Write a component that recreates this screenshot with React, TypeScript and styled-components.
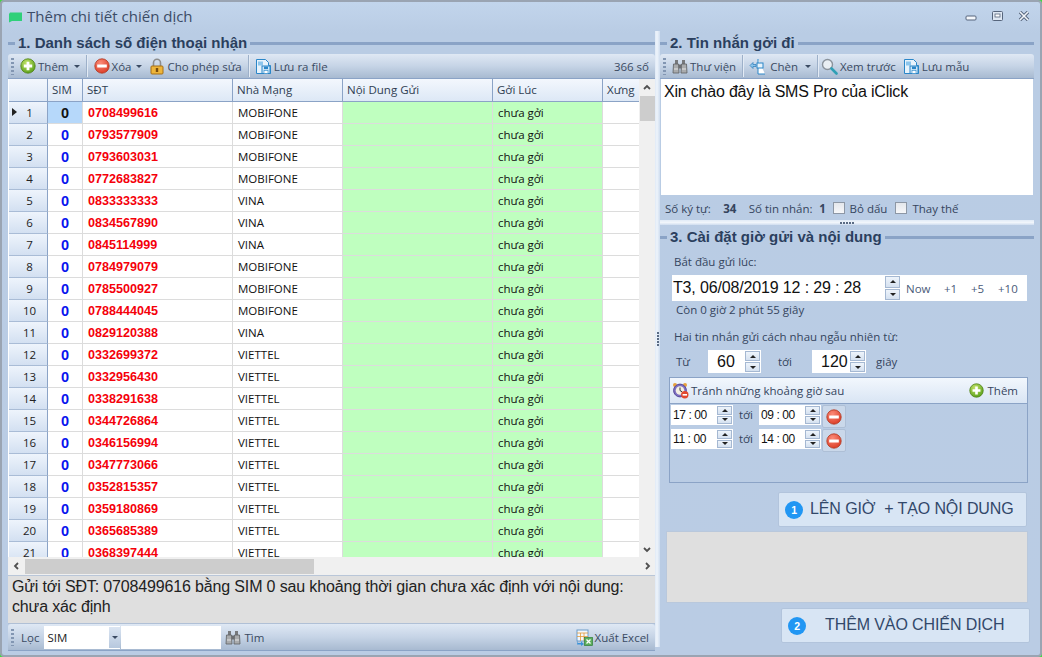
import React from "react";
import styled, { createGlobalStyle } from "styled-components";

const Global = createGlobalStyle`
  html, body { margin: 0; padding: 0; background: #3ddc3d; }
  #root { width: 1042px; height: 657px; overflow: hidden; }
  * { box-sizing: border-box; }
`;

const UI = `"Open Sans", "Noto Sans", "DejaVu Sans", sans-serif`;
const ARIAL = `"Liberation Sans", Arial, sans-serif`;

const Win = styled.div`
  width: 1042px; height: 657px; display: flex; flex-direction: column;
  background: linear-gradient(#c2d5ec 0, #b9cce4 31px, #bacce4 100%);
  border: 2px solid #9aa4b2; border-radius: 4px; overflow: hidden;
  font-family: ${UI}; font-size: 11.5px; color: #35455e;
`;
const TitleBar = styled.div`
  height: 29px; flex: none; display: flex; align-items: center; padding: 0 10px 0 6px; gap: 5px;
`;
const TitleText = styled.div`font-size: 15px; color: #3c4c66; flex: 1; margin-top: -2px;`;
const WinBtns = styled.div`display: flex; gap: 15px; align-items: center; margin-top: -1px;`;
const Main = styled.div`flex: 1; display: flex; min-height: 0; padding: 0 6px 6px 6px;`;
const LeftPanel = styled.div`width: 647px; flex: none; display: flex; flex-direction: column;`;
const VSplit = styled.div`
  width: 5px; flex: none; background: linear-gradient(90deg, #dfe9f6, #eef4fb 40%, #cfddef);
  display: flex; flex-direction: column; justify-content: center; align-items: center; gap: 1px;
  margin-bottom: 2px;
`;
const Dot = styled.i`display: block; width: 2px; height: 2px; background: #5a6b84;`;
const RightPanel = styled.div`flex: 1; display: flex; flex-direction: column; min-width: 0;`;

const Heading = styled.div<{ $indent: number }>`
  height: 23px; flex: none; display: flex; align-items: center; gap: 3px;
  font: bold 15px ${ARIAL}; color: #2b3f5e; white-space: nowrap;
  &::before { content: ""; width: ${(p) => p.$indent}px; height: 3px; background: #8aa3c6; margin-top: 1px; }
  &::after { content: ""; flex: 1; height: 3px; background: #8aa3c6; margin-top: 1px; }
`;
const Toolbar = styled.div<{ $h?: number }>`
  height: ${(p) => p.$h ?? 25}px; flex: none; display: flex; align-items: center; padding: 0 6px 0 2px;
  background: linear-gradient(#dfe8f4, #c6d4e6 50%, #a8bad1);
  border-bottom: 1px solid #8ba3c6; border-radius: 3px 3px 0 0; color: #3a4a62; white-space: nowrap;
`;
const Grip = styled.div`
  width: 3px; height: 17px; margin: 0 3px 0 1px; flex: none;
  background: repeating-linear-gradient(#8296b2 0 2px, transparent 2px 4px);
`;
const TbItem = styled.div<{ $gap?: number; $ml?: number; $mr?: number }>`
  display: flex; align-items: center; gap: ${(p) => p.$gap ?? 2}px; padding: 0 3px; flex: none;
  margin-left: ${(p) => p.$ml ?? 0}px; margin-right: ${(p) => p.$mr ?? 0}px;
`;
const TbSep = styled.div`width: 1px; height: 22px; background: #9db0c9; box-shadow: 1px 0 0 #e3ebf5; margin: 0 3px; flex: none;`;
const Spacer = styled.div`flex: 1;`;
const Caret = styled.i`
  display: block; width: 0; height: 0; margin-left: 3px; margin-top: 1px;
  border-left: 3px solid transparent; border-right: 3px solid transparent; border-top: 3px solid #3a4a62;
`;
const FilterLabel = styled.span`margin-left: 4px;`;

const GridWrap = styled.div`height: 496px; flex: none; display: flex; flex-direction: column; background: #f0f0f0;`;
const GridTop = styled.div`height: 478px; flex: none; display: flex;`;
const Viewport = styled.div`width: 631px; flex: none; overflow: hidden; background: #fff; padding-left: 1px;`;
const Columns = "39px 35px 150px 110px 150px 110px 38px";
const HeadRow = styled.div`
  display: grid; grid-template-columns: ${Columns}; height: 23px;
  border-bottom: 1px solid #8ba3c6;
`;
const HeadCell = styled.div`
  display: flex; align-items: center; padding: 0 0 1px 4px; overflow: hidden; white-space: nowrap;
  background: linear-gradient(#f3f7fd, #dde8f6); border-right: 1px solid #8ba3c6; color: #2f3d52;
`;
const Row = styled.div`display: grid; grid-template-columns: ${Columns}; height: 22px;`;
const Cell = styled.div<{ $green?: boolean }>`
  display: flex; align-items: center; padding-left: 5px; white-space: nowrap; overflow: hidden;
  color: #111; border-right: 1px solid #dcdcdc; border-bottom: 1px solid #dcdcdc;
  background: ${(p) => (p.$green ? "#bfffbf" : "#fff")};
`;
const RowHead = styled.div`
  position: relative; display: flex; align-items: center; justify-content: center; padding-left: 3px;
  background: linear-gradient(#eef4fc, #d3e0f1); border-right: 1px solid #8ba3c6; border-bottom: 1px solid #a9bcd6;
  color: #222;
`;
const RowMark = styled.i`
  position: absolute; left: 3px; top: 6px; width: 0; height: 0;
  border-top: 4px solid transparent; border-bottom: 4px solid transparent; border-left: 5px solid #222;
`;
const SimCell = styled(Cell)<{ $sel?: boolean }>`
  justify-content: center; padding-left: 0; font: bold 14.5px ${ARIAL};
  color: ${(p) => (p.$sel ? "#111" : "#0a14ee")};
  background: ${(p) => (p.$sel ? "#b6d8fa" : "#fff")};
`;
const PhoneCell = styled(Cell)`font: bold 12.6px ${ARIAL}; color: #f5000a;`;

const VBar = styled.div`width: 16px; flex: none; display: flex; flex-direction: column; align-items: center; background: #f0f0f0;`;
const VBtn = styled.div`height: 17px; width: 100%; display: flex; align-items: center; justify-content: center; flex: none;`;
const VThumb = styled.div`width: 15px; height: 25px; background: #cdcdcd; flex: none;`;
const HBar = styled.div`height: 18px; flex: none; display: flex; align-items: center; background: #f0f0f0; padding-right: 0;`;
const HThumb = styled.div`width: 289px; height: 15px; background: #cdcdcd; flex: none;`;
const HBtn = styled.div`width: 17px; height: 100%; display: flex; align-items: center; justify-content: center; flex: none;`;

const MsgBox = styled.div`
  height: 49px; flex: none; background: #dfdfdf; border-top: 1px solid #b9c6d8; border-bottom: 1px solid #b0c0d6;
  padding: 1px 8px 0 4px; font: 16px/20px ${ARIAL}; color: #222; letter-spacing: -0.15px;
`;
const FilterCombo = styled.div`width: 76px; height: 23px; background: #fff; display: flex; align-items: center; padding-left: 3px; color: #222; flex: none; margin-left: 5px; justify-content: space-between;`;
const ComboArrow = styled.div`width: 11px; height: 21px; background: linear-gradient(#dbe5f2, #b7c8de); display: flex; align-items: center; justify-content: center;`;
const FilterInput = styled.div`width: 100px; height: 23px; background: #fff; margin: 0 1px 0 1px; flex: none;`;

const TextArea = styled.div`
  height: 116px; flex: none; background: #fff; margin: 0 1px; padding: 3px 3px; font: 16px/20px ${ARIAL}; color: #111; letter-spacing: -0.2px;
`;
const Stats = styled.div`
  height: 25px; flex: none; display: flex; align-items: center; padding-left: 5px; padding-top: 1px; white-space: nowrap;
`;
const StatV = styled.b<{ $w: number }>`display: block; width: ${(p) => p.$w}px; text-align: center; font-weight: 700;`;
const Check = styled.i<{ $ml: number }>`display: block; width: 12px; height: 12px; margin-left: ${(p) => p.$ml}px; border: 1px solid #8d97a5; background: linear-gradient(#e4e7ec, #f6f7f9); margin-right: 5px;`;
const HSplit = styled.div`
  height: 5px; flex: none; background: linear-gradient(#e1ebf7, #f0f5fb, #cfddef);
  display: flex; align-items: center; justify-content: center; gap: 1px;
`;
const Section = styled.div`flex: 1; display: flex; flex-direction: column; padding-left: 9px; padding-right: 6px;`;
const Label = styled.div<{ $mt: number; $ml?: number }>`margin-top: ${(p) => p.$mt}px; margin-left: ${(p) => p.$ml ?? 5}px; height: 16px; line-height: 16px; white-space: nowrap;`;
const DateBox = styled.div`
  margin: 5px 0 0 3px; height: 26px; width: 355px; flex: none; background: #fff; display: flex; align-items: center; padding-left: 1px;
`;
const DateText = styled.div`width: 212px; font: 16px ${ARIAL}; color: #111; white-space: pre; flex: none; letter-spacing: -0.15px;`;
const QuickBtn = styled.div<{ $w: number }>`width: ${(p) => p.$w}px; flex: none; color: #4a5a78;`;
const SpinWrap = styled.div<{ $w: number; $h: number }>`
  width: ${(p) => p.$w}px; height: ${(p) => p.$h}px; flex: none; display: flex; flex-direction: column; gap: 1px;
`;
const SpinBtn = styled.div`
  flex: 1; background: linear-gradient(#eef4fb, #d5e1f0); border: 1px solid #a5b8d2; display: flex; align-items: center; justify-content: center;
`;
const Arrow = styled.i<{ $up?: boolean }>`
  display: block; width: 0; height: 0; border-left: 3px solid transparent; border-right: 3px solid transparent;
  ${(p) => (p.$up ? "border-bottom: 3px solid #222;" : "border-top: 3px solid #222;")}
`;
const RangeRow = styled.div`display: flex; align-items: center; height: 23px; margin-top: 5px; flex: none;`;
const RangeLabel = styled.div<{ $w: number; $ml: number }>`width: ${(p) => p.$w}px; margin-left: ${(p) => p.$ml}px; flex: none; white-space: nowrap;`;
const NumBox = styled.div<{ $w: number }>`
  width: ${(p) => p.$w}px; height: 23px; background: #fff; display: flex; align-items: center; justify-content: space-between; padding: 0 1px 0 9px; flex: none;
  font: 16px ${ARIAL}; color: #111;
`;
const AvoidPanel = styled.div`
  margin-top: 4px; width: 359px; height: 106px; flex: none; border: 1px solid #8ba3c6; display: flex; flex-direction: column;
`;
const AvoidHead = styled.div`
  height: 26px; flex: none; background: linear-gradient(#f2f7fd, #d9e5f4); border-bottom: 1px solid #8ba3c6;
  display: flex; align-items: center; padding: 0 9px 0 2px; gap: 2px;
`;
const AddLabel = styled.span`margin-left: 2px;`;
const AvoidRow = styled.div`display: flex; align-items: flex-start; height: 24px; padding: 1px 0 0 1px; flex: none;`;
const TimeBox = styled.div`
  width: 62px; height: 20px; background: #fff; display: flex; align-items: center; justify-content: space-between; padding: 0 1px 0 2px; flex: none;
  font: 12px ${ARIAL}; color: #111; white-space: pre; letter-spacing: -0.4px;
`;
const TimeLabel = styled.div`width: 26px; line-height: 20px; text-align: center; flex: none;`;
const DelBtn = styled.div`
  width: 24px; height: 23px; margin-left: 1px; background: #cad8ea; border: 1px solid #aebfd6; border-radius: 2px; display: flex; align-items: center; justify-content: center; flex: none;
`;
const BigBtn = styled.div<{ $w: number; $ml: number; $mt: number; $gap: number }>`
  width: ${(p) => p.$w}px; height: 35px; flex: none; margin-left: ${(p) => p.$ml}px; margin-top: ${(p) => p.$mt}px;
  background: #d8e5f4; border: 1px solid #b2c4dc; border-radius: 2px;
  display: flex; align-items: center; padding-left: 6px; gap: ${(p) => p.$gap}px; white-space: pre;
  font: 16px ${ARIAL}; color: #32486a; letter-spacing: -0.1px;
`;
const BtnText = styled.span`margin-top: -2px;`;
const Badge = styled.div`
  width: 18px; height: 18px; border-radius: 50%; background: #2196f3; color: #fff; flex: none;
  font: bold 10.5px ${ARIAL}; display: flex; align-items: center; justify-content: center;
`;
const GreyBox = styled.div`
  height: 72px; width: 362px; flex: none; margin-top: 4px; background: #dfdfdf; border: 1px solid #b9c8dc; margin-left: -3px;
`;

const PlusIcon = ({ s = 16 }: { s?: number }) => (
  <svg width={s} height={s} viewBox="0 0 16 16">
    <defs><radialGradient id="gp" cx=".4" cy=".3" r=".8"><stop offset="0" stopColor="#c4e36a" /><stop offset="1" stopColor="#4f9a12" /></radialGradient></defs>
    <circle cx="8" cy="8" r="7.2" fill="url(#gp)" stroke="#4c7f14" strokeWidth=".8" />
    <path d="M6.6 3.8h2.8v2.8h2.8v2.8H9.4v2.8H6.6V9.4H3.8V6.6h2.8z" fill="#fff" />
  </svg>
);
const MinusIcon = ({ s = 16 }: { s?: number }) => (
  <svg width={s} height={s} viewBox="0 0 16 16">
    <defs><radialGradient id="rm" cx=".4" cy=".3" r=".8"><stop offset="0" stopColor="#fb8b78" /><stop offset="1" stopColor="#d8341e" /></radialGradient></defs>
    <circle cx="8" cy="8" r="7.2" fill="url(#rm)" stroke="#b0371f" strokeWidth=".8" />
    <rect x="3.2" y="6.5" width="9.6" height="3" fill="#fff" />
  </svg>
);
const LockIcon = () => (
  <svg width="14" height="17" viewBox="0 0 14 17">
    <path d="M3.5 8V4.8a3.5 3.5 0 0 1 7 0V8" fill="none" stroke="#8d8d8d" strokeWidth="1.6" />
    <rect x="1" y="8" width="12" height="8" rx="1" fill="#eeb53a" stroke="#a66f14" />
    <rect x="5.8" y="10" width="2.4" height="4" fill="#7a4c0c" />
  </svg>
);
const SaveIcon = () => (
  <svg width="17" height="17" viewBox="0 0 17 17">
    <path d="M1.5 1.5h9l3 3v3h2v8h-14z" fill="#e7f3fc" stroke="#2a86c8" />
    <rect x="3" y="3.5" width="5" height="4" fill="#8cc5ec" />
    <rect x="7" y="8" width="8" height="7.5" fill="#cfe7f8" stroke="#2a86c8" />
    <rect x="9" y="8.5" width="4" height="2.6" fill="#2a86c8" />
    <rect x="9" y="12.5" width="4" height="3" fill="#fff" stroke="#2a86c8" strokeWidth=".6" />
  </svg>
);
const BinocIcon = () => (
  <svg width="16" height="15" viewBox="0 0 16 15">
    <path d="M3 1h3v4H3zM10 1h3v4h-3z" fill="#77797c" />
    <path d="M1.5 5h5l.5 9H1zM9.5 5h5l.5 9H9z" fill="#a9abad" stroke="#5d5f62" strokeWidth=".8" />
    <rect x="6.5" y="5.5" width="3" height="4" fill="#6c6e71" />
    <path d="M2 10h4M10 10h4" stroke="#e4e4e4" />
  </svg>
);
const InsertIcon = () => (
  <svg width="17" height="17" viewBox="0 0 17 17">
    <path d="M9 1v15h7" fill="#fff" stroke="#2a86c8" />
    <rect x="8" y="5" width="6" height="5" fill="#e8f3fb" stroke="#2a86c8" />
    <path d="M1 7.5l3-3v2h3v2H4v2z" fill="#8cc5ec" stroke="#2a7ab8" strokeWidth=".7" />
  </svg>
);
const SearchIcon = () => (
  <svg width="17" height="17" viewBox="0 0 17 17">
    <circle cx="6.5" cy="6.5" r="5" fill="#e9eef3" stroke="#8b939c" strokeWidth="1.4" />
    <path d="M10.5 10.5l5 5" stroke="#2f9fb5" strokeWidth="2.6" strokeLinecap="round" />
  </svg>
);
const ExcelIcon = () => (
  <svg width="17" height="17" viewBox="0 0 17 17">
    <rect x="1" y="1" width="11" height="11" fill="#f3f7fb" stroke="#6f9dc9" />
    <path d="M1 4h11M1 7.5h11M4.5 4v8M8 4v8" stroke="#e39a3a" strokeWidth=".8" />
    <path d="M2 11v3h3v-1.6l3 2.6-3 2v-1.4H1z" fill="#3a92d8" />
    <rect x="8.5" y="8.5" width="8" height="8" fill="#5cae5c" stroke="#2f7d38" strokeWidth=".7" />
    <path d="M10.5 10.5l4 4m0-4l-4 4" stroke="#fff" strokeWidth="1.3" />
  </svg>
);
const AlarmIcon = () => (
  <svg width="17" height="17" viewBox="0 0 17 17">
    <circle cx="3" cy="3" r="2" fill="#e8a13c" />
    <circle cx="13" cy="3" r="2" fill="#e8a13c" />
    <circle cx="8" cy="8.5" r="6.4" fill="#7d6fc0" stroke="#56489a" />
    <circle cx="8" cy="8.5" r="4.3" fill="#f4efe2" />
    <path d="M8 5.5v3l2.2 1.4" stroke="#333" fill="none" />
    <circle cx="12.8" cy="12.8" r="3.7" fill="#e2492f" />
    <rect x="10.6" y="12" width="4.4" height="1.6" fill="#fff" />
  </svg>
);
const ChatIcon = () => (
  <svg width="14" height="12" viewBox="0 0 14 12">
    <path d="M2 1.5h12v8.5H4L1 11.5V3z" fill="#2fd07a" />
  </svg>
);
const Chevron = ({ dir }: { dir: "up" | "down" | "left" | "right" }) => {
  const d = { up: "M2 6l3-3 3 3", down: "M2 4l3 3 3-3", left: "M6 2L3 5l3 3", right: "M4 2l3 3-3 3" }[dir];
  return (
    <svg width="10" height="10" viewBox="0 0 10 10">
      <path d={d} fill="none" stroke="#505050" strokeWidth="1.8" />
    </svg>
  );
};
const Spin = ({ w, h }: { w: number; h: number }) => (
  <SpinWrap $w={w} $h={h}>
    <SpinBtn><Arrow $up /></SpinBtn>
    <SpinBtn><Arrow /></SpinBtn>
  </SpinWrap>
);

const phones = [
  "0708499616", "0793577909", "0793603031", "0772683827", "0833333333", "0834567890", "0845114999",
  "0784979079", "0785500927", "0788444045", "0829120388", "0332699372", "0332956430", "0338291638",
  "0344726864", "0346156994", "0347773066", "0352815357", "0359180869", "0365685389", "0368397444",
];
const carrier = (i: number) =>
  i < 4 || (i >= 7 && i <= 9) ? "MOBIFONE" : i <= 6 || i === 10 ? "VINA" : "VIETTEL";

const dots = [0, 1, 2, 3, 4];

export default function App() {
  return (
    <Win>
      <Global />
      <TitleBar>
        <ChatIcon />
        <TitleText>Thêm chi tiết chiến dịch</TitleText>
        <WinBtns>
          <svg width="12" height="10" viewBox="0 0 12 10"><rect x="1" y="5" width="10" height="4" rx="1" fill="#f4f7fb" stroke="#56657c" /></svg>
          <svg width="11" height="10" viewBox="0 0 11 10"><rect x=".5" y=".5" width="10" height="9" rx="1" fill="#dfe8f3" stroke="#56657c" /><rect x="3" y="3" width="5" height="3" fill="#fff" stroke="#56657c" strokeWidth=".8" /></svg>
          <svg width="12" height="10" viewBox="0 0 12 10"><path d="M2 1l8 8M10 1L2 9" stroke="#56657c" strokeWidth="3.4" /><path d="M2 1l8 8M10 1L2 9" stroke="#f2f5f9" strokeWidth="1.6" /></svg>
        </WinBtns>
      </TitleBar>
      <Main>
        <LeftPanel>
          <Heading $indent={7}>1. Danh sách số điện thoại nhận</Heading>
          <Toolbar>
            <Grip />
            <TbItem><PlusIcon /><span>Thêm</span><Caret /></TbItem>
            <TbSep />
            <TbItem $ml={1}><MinusIcon /><span>Xóa</span><Caret /></TbItem>
            <TbItem $ml={2} $gap={3}><LockIcon /><span>Cho phép sửa</span></TbItem>
            <TbSep />
            <TbItem><SaveIcon /><span>Lưu ra file</span></TbItem>
            <Spacer />
            <span>366 số</span>
          </Toolbar>
          <GridWrap>
            <GridTop>
              <Viewport>
                <HeadRow>
                  <HeadCell />
                  <HeadCell>SIM</HeadCell>
                  <HeadCell>SĐT</HeadCell>
                  <HeadCell>Nhà Mạng</HeadCell>
                  <HeadCell>Nội Dung Gửi</HeadCell>
                  <HeadCell>Gởi Lúc</HeadCell>
                  <HeadCell>Xưng</HeadCell>
                </HeadRow>
                {phones.map((p, i) => (
                  <Row key={p}>
                    <RowHead>{i === 0 && <RowMark />}{i + 1}</RowHead>
                    <SimCell $sel={i === 0}>0</SimCell>
                    <PhoneCell>{p}</PhoneCell>
                    <Cell>{carrier(i)}</Cell>
                    <Cell $green />
                    <Cell $green>chưa gởi</Cell>
                    <Cell />
                  </Row>
                ))}
              </Viewport>
              <VBar>
                <VBtn><Chevron dir="up" /></VBtn>
                <VThumb />
                <Spacer />
                <VBtn><Chevron dir="down" /></VBtn>
              </VBar>
            </GridTop>
            <HBar>
              <HBtn><Chevron dir="left" /></HBtn>
              <HThumb />
              <Spacer />
              <HBtn><Chevron dir="right" /></HBtn>
            </HBar>
          </GridWrap>
          <MsgBox>Gửi tới SĐT: 0708499616 bằng SIM 0 sau khoảng thời gian chưa xác định với nội dung: chưa xác định</MsgBox>
          <Toolbar $h={27}>
            <Grip />
            <FilterLabel>Lọc</FilterLabel>
            <FilterCombo><span>SIM</span><ComboArrow><Caret style={{ margin: 0 }} /></ComboArrow></FilterCombo>
            <FilterInput />
            <TbItem $gap={3}><BinocIcon /><span>Tìm</span></TbItem>
            <Spacer />
            <TbItem $mr={-3}><ExcelIcon /><span>Xuất Excel</span></TbItem>
          </Toolbar>
        </LeftPanel>
        <VSplit>{dots.map((d) => <Dot key={d} />)}</VSplit>
        <RightPanel>
          <Heading $indent={7}>2. Tin nhắn gởi đi</Heading>
          <Toolbar>
            <Grip />
            <TbItem><BinocIcon /><span>Thư viện</span></TbItem>
            <TbSep />
            <TbItem $gap={4}><InsertIcon /><span>Chèn</span><Caret /></TbItem>
            <TbSep />
            <TbItem $ml={-3}><SearchIcon /><span>Xem trước</span></TbItem>
            <TbItem $ml={1}><SaveIcon /><span>Lưu mẫu</span></TbItem>
          </Toolbar>
          <TextArea>Xin chào đây là SMS Pro của iClick</TextArea>
          <Stats>
            <span>Số ký tự:</span>
            <StatV $w={38}>34</StatV>
            <span>Số tin nhắn:</span>
            <StatV $w={20}>1</StatV>
            <Check $ml={0} />
            <span>Bỏ dấu</span>
            <Check $ml={8} />
            <span>Thay thế</span>
          </Stats>
          <HSplit>{dots.map((d) => <Dot key={d} />)}</HSplit>
          <Heading $indent={7}>3. Cài đặt giờ gửi và nội dung</Heading>
          <Section>
            <Label $mt={6}>Bắt đầu gửi lúc:</Label>
            <DateBox>
              <DateText>T3, 06/08/2019 12 : 29 : 28</DateText>
              <Spin w={15} h={24} />
              <QuickBtn $w={6} />
              <QuickBtn $w={38}>Now</QuickBtn>
              <QuickBtn $w={27}>+1</QuickBtn>
              <QuickBtn $w={27}>+5</QuickBtn>
              <QuickBtn $w={24}>+10</QuickBtn>
            </DateBox>
            <Label $mt={1} $ml={7}>Còn 0 giờ 2 phút 55 giây</Label>
            <Label $mt={11}>Hai tin nhắn gửi cách nhau ngẫu nhiên từ:</Label>
            <RangeRow>
              <RangeLabel $w={32} $ml={7}>Từ</RangeLabel>
              <NumBox $w={53}><span>60</span><Spin w={15} h={21} /></NumBox>
              <RangeLabel $w={34} $ml={17}>tới</RangeLabel>
              <NumBox $w={54}><span>120</span><Spin w={15} h={21} /></NumBox>
              <RangeLabel $w={40} $ml={10}>giây</RangeLabel>
            </RangeRow>
            <AvoidPanel>
              <AvoidHead>
                <AlarmIcon />
                <span>Tránh những khoảng giờ sau</span>
                <Spacer />
                <PlusIcon s={15} />
                <AddLabel>Thêm</AddLabel>
              </AvoidHead>
              <AvoidRow>
                <TimeBox>17 : 00<Spin w={15} h={18} /></TimeBox>
                <TimeLabel>tới</TimeLabel>
                <TimeBox>09 : 00<Spin w={15} h={18} /></TimeBox>
                <DelBtn><MinusIcon /></DelBtn>
              </AvoidRow>
              <AvoidRow>
                <TimeBox>11 : 00<Spin w={15} h={18} /></TimeBox>
                <TimeLabel>tới</TimeLabel>
                <TimeBox>14 : 00<Spin w={15} h={18} /></TimeBox>
                <DelBtn><MinusIcon /></DelBtn>
              </AvoidRow>
            </AvoidPanel>
            <BigBtn $w={249} $ml={109} $mt={9} $gap={7}>
              <Badge>1</Badge>
              <BtnText>LÊN GIỜ  + TẠO NỘI DUNG</BtnText>
            </BigBtn>
            <GreyBox />
            <BigBtn $w={249} $ml={112} $mt={5} $gap={19}>
              <Badge>2</Badge>
              <BtnText>THÊM VÀO CHIẾN DỊCH</BtnText>
            </BigBtn>
          </Section>
        </RightPanel>
      </Main>
    </Win>
  );
}
